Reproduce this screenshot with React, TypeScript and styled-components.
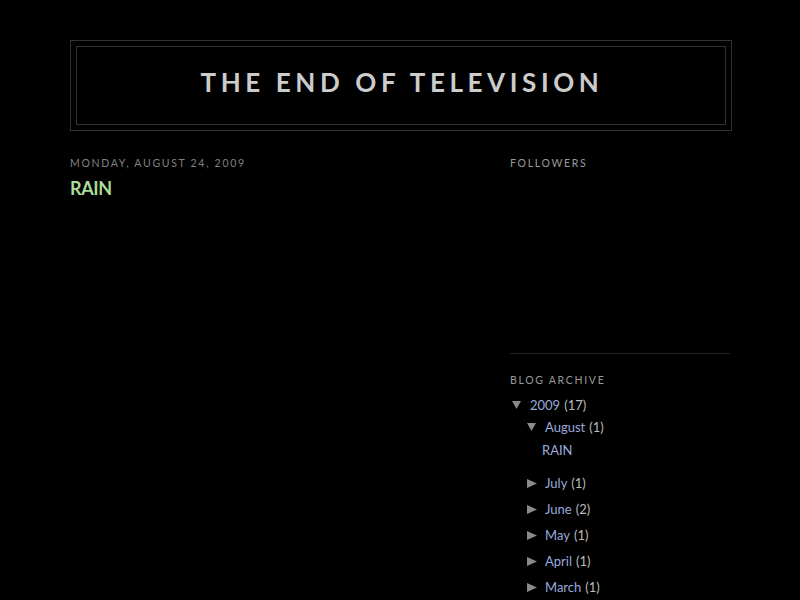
import React from "react";
import styled, { createGlobalStyle } from "styled-components";

const Global = createGlobalStyle`
  html, body { margin: 0; padding: 0; background: #000; }
  body {
    color: #ccc;
    font-family: Lato, "Open Sans", "DejaVu Sans", sans-serif;
    font-size: 13px;
  }
  * { box-sizing: border-box; }
`;

const Outer = styled.div`
  width: 662px;
  margin: 40px 0 0 calc(50% - 330px);
`;

const HeaderWrapper = styled.header`
  border: 1px solid #333;
  padding: 5px;
`;

const HeaderInner = styled.div`
  border: 1px solid #333;
  height: 79px;
  padding-top: 20px;
  text-align: center;
`;

const BlogTitle = styled.h1`
  margin: 0;
  font-size: 26px;
  line-height: 30px;
  font-weight: bold;
  letter-spacing: 4.6px;
  text-transform: uppercase;
  color: #ccc;
  padding-left: 2px;
`;

const Content = styled.div`
  display: flex;
  justify-content: space-between;
  width: 660px;
  margin: 25px 0 0;
`;

const Main = styled.main`
  width: 410px;
`;

const Sidebar = styled.aside`
  width: 220px;
`;

const SmallHeading = styled.h2<{ $tone?: string }>`
  margin: 0;
  font-size: 10.5px;
  line-height: 14px;
  font-weight: normal;
  letter-spacing: 1.7px;
  text-transform: uppercase;
  color: ${(p) => p.$tone || "#999"};
`;

const PostTitle = styled.h3`
  margin: 6px 0 0;
  font-size: 18px;
  line-height: 24px;
  font-weight: bold;
  letter-spacing: -0.4px;
  color: #aadd99;
`;

const Widget = styled.section<{ $height?: number; $divider?: boolean }>`
  ${(p) => (p.$height ? `height: ${p.$height}px;` : "")}
  ${(p) => (p.$divider ? "border-bottom: 1px solid #222;" : "")}
  margin-bottom: ${(p) => (p.$divider ? "19px" : "0")};
`;

const ArchiveList = styled.ul`
  list-style: none;
  margin: 8px 0 0;
  padding: 0;
`;

const NestedList = styled.ul<{ $indent: number; $top: number; $bottom?: number }>`
  list-style: none;
  margin: ${(p) => p.$top}px 0 ${(p) => p.$bottom || 0}px;
  padding: 0 0 0 ${(p) => p.$indent}px;
`;

const Item = styled.li<{ $gap?: number }>`
  & + & {
    margin-top: ${(p) => p.$gap || 0}px;
  }
`;

const Row = styled.div`
  display: flex;
  align-items: center;
  height: 20px;
  line-height: 20px;
  white-space: nowrap;
`;

const Toggle = styled.span`
  display: inline-flex;
  flex: none;
  width: 20px;
  height: 20px;
  align-items: center;
  padding-left: 2px;
`;

const Link = styled.a`
  color: #99aadd;
  text-decoration: none;
`;

const Count = styled.span`
  color: #bbb;
  margin-left: 4px;
`;

const Down = () => (
  <svg width="9" height="8" viewBox="0 0 9 8">
    <polygon points="0,0 9,0 4.5,8" fill="#8a8a8a" />
  </svg>
);

const Right = () => (
  <svg width="10" height="9" viewBox="0 0 10 9">
    <polygon points="0,0 10,4.5 0,9" fill="#8a8a8a" />
  </svg>
);

const months = [
  { name: "July", count: 1 },
  { name: "June", count: 2 },
  { name: "May", count: 1 },
  { name: "April", count: 1 },
  { name: "March", count: 1 },
];

export default function App() {
  return (
    <>
      <Global />
      <Outer>
        <HeaderWrapper>
          <HeaderInner>
            <BlogTitle>The End of Television</BlogTitle>
          </HeaderInner>
        </HeaderWrapper>
        <Content>
          <Main>
            <SmallHeading $tone="#808080">Monday, August 24, 2009</SmallHeading>
            <PostTitle>RAIN</PostTitle>
          </Main>
          <Sidebar>
            <Widget $height={198} $divider>
              <SmallHeading>Followers</SmallHeading>
            </Widget>
            <Widget>
              <SmallHeading>Blog Archive</SmallHeading>
              <ArchiveList>
                <Item>
                  <Row>
                    <Toggle>
                      <Down />
                    </Toggle>
                    <Link href="#">2009</Link>
                    <Count>(17)</Count>
                  </Row>
                  <NestedList $indent={15} $top={2}>
                    <Item $gap={6}>
                      <Row>
                        <Toggle>
                          <Down />
                        </Toggle>
                        <Link href="#">August</Link>
                        <Count>(1)</Count>
                      </Row>
                      <NestedList $indent={17} $top={3} $bottom={13}>
                        <Item>
                          <Row>
                            <Link href="#">RAIN</Link>
                          </Row>
                        </Item>
                      </NestedList>
                    </Item>
                    {months.map((m) => (
                      <Item $gap={6} key={m.name}>
                        <Row>
                          <Toggle>
                            <Right />
                          </Toggle>
                          <Link href="#">{m.name}</Link>
                          <Count>({m.count})</Count>
                        </Row>
                      </Item>
                    ))}
                  </NestedList>
                </Item>
              </ArchiveList>
            </Widget>
          </Sidebar>
        </Content>
      </Outer>
    </>
  );
}
